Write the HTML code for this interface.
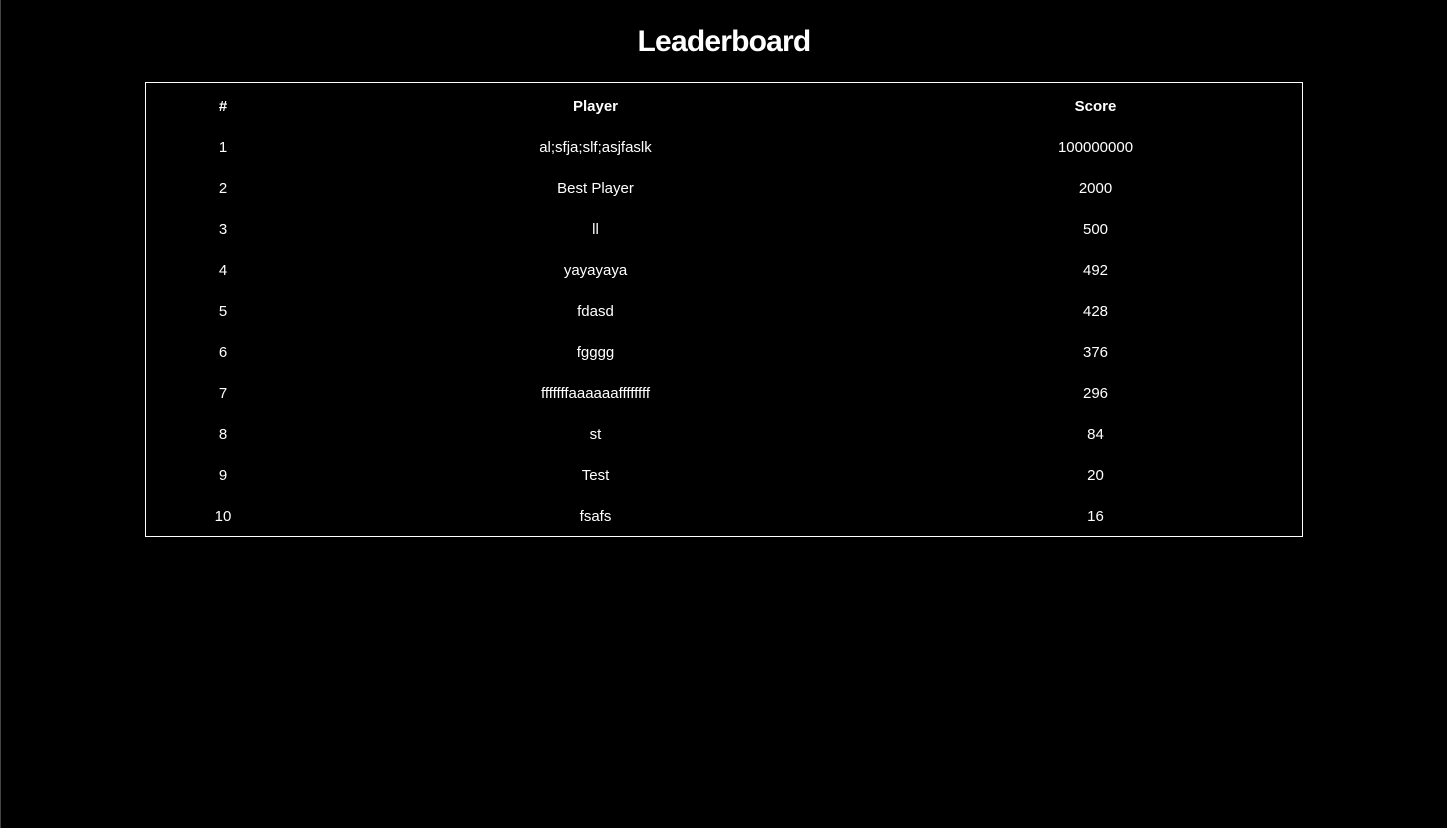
<!DOCTYPE html>
<html><head><meta charset="utf-8"><style>
html,body{margin:0;padding:0;background:#000;width:1447px;height:828px;overflow:hidden}
body{position:relative;font-family:"Liberation Sans",sans-serif;color:#fff;border-left:1px solid #444;box-sizing:border-box}
h1{position:absolute;left:0;width:1446px;top:22px;margin:0;text-align:center;font-size:30px;line-height:40px;font-weight:bold;letter-spacing:-0.8px}
.box{position:absolute;left:144px;top:82px;width:1156px;height:453px;border:1px solid #fff}
.r{position:absolute;left:0;width:1156px;height:20px;font-size:15px;line-height:20px}
.r span{position:absolute;top:0;text-align:center}
.r span.a{left:0;width:154px}
.r span.b{left:250px;width:399px}
.r span.c{left:799px;width:301px}
.h{font-weight:bold;font-size:15px}
</style></head><body>
<h1>Leaderboard</h1>
<div class="box">
<div class="r h" style="top:14px"><span class="a">#</span><span class="b">Player</span><span class="c">Score</span></div>
<div class="r" style="top:55px"><span class="a">1</span><span class="b">al;sfja;slf;asjfaslk</span><span class="c">100000000</span></div>
<div class="r" style="top:96px"><span class="a">2</span><span class="b">Best Player</span><span class="c">2000</span></div>
<div class="r" style="top:137px"><span class="a">3</span><span class="b">ll</span><span class="c">500</span></div>
<div class="r" style="top:178px"><span class="a">4</span><span class="b">yayayaya</span><span class="c">492</span></div>
<div class="r" style="top:219px"><span class="a">5</span><span class="b">fdasd</span><span class="c">428</span></div>
<div class="r" style="top:260px"><span class="a">6</span><span class="b">fgggg</span><span class="c">376</span></div>
<div class="r" style="top:301px"><span class="a">7</span><span class="b">fffffffaaaaaaffffffff</span><span class="c">296</span></div>
<div class="r" style="top:342px"><span class="a">8</span><span class="b">st</span><span class="c">84</span></div>
<div class="r" style="top:383px"><span class="a">9</span><span class="b">Test</span><span class="c">20</span></div>
<div class="r" style="top:424px"><span class="a">10</span><span class="b">fsafs</span><span class="c">16</span></div>
</div>
</body></html>
